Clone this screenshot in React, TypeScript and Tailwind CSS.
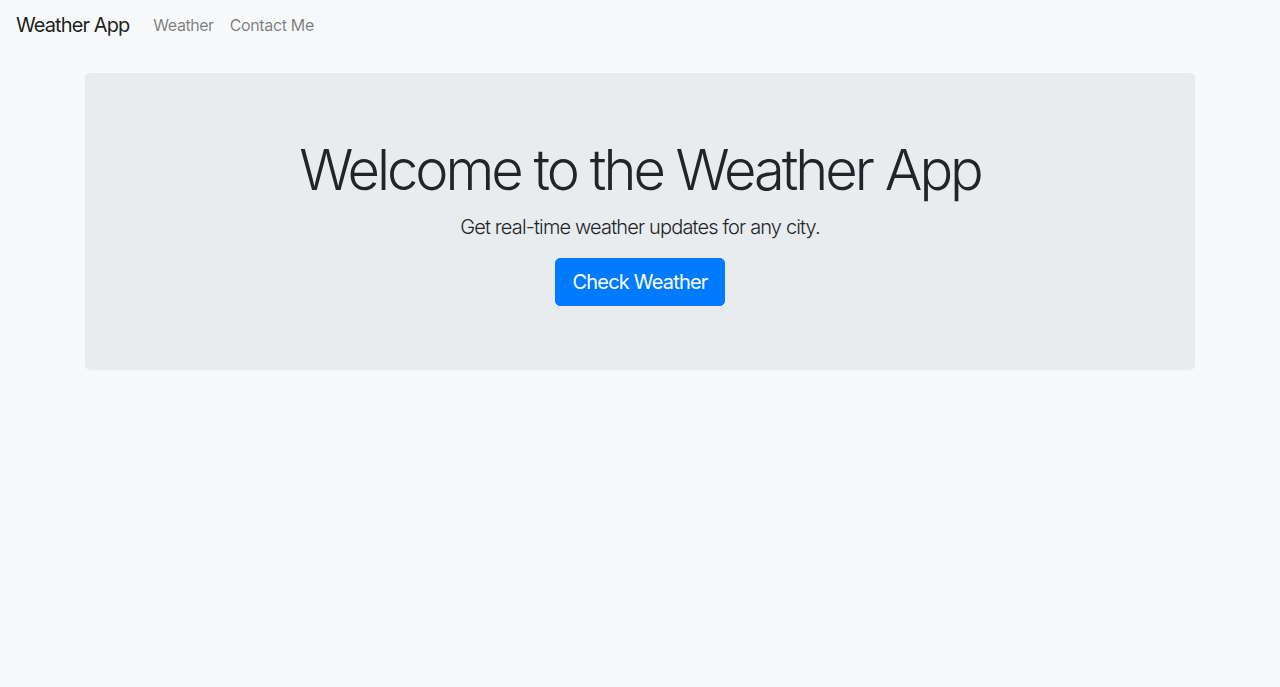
import React from "react";

const App = () => {
  return (
    <div
      className="min-h-screen w-full bg-[#f8f9fa] text-[#212529]"
      style={{ fontFamily: "Inter, 'Noto Sans', 'Liberation Sans', sans-serif" }}
    >
      <nav className="flex items-center px-4 pt-[10px]">
        <a href="#" className="mr-4 text-[20px] leading-[30px] tracking-[-0.9px] text-black/90">
          Weather App
        </a>
        <ul className="flex">
          <li>
            <a href="#" className="px-2 text-[16px] leading-[30px] tracking-[-0.45px] text-black/50">
              Weather
            </a>
          </li>
          <li>
            <a href="#" className="px-2 text-[16px] leading-[30px] tracking-[-0.35px] text-black/50">
              Contact Me
            </a>
          </li>
        </ul>
      </nav>

      <div className="mx-auto mt-[33px] w-[1140px] px-[15px]">
        <div className="rounded-[5px] bg-[#e9ecef] px-8 py-16 text-center">
          <h1 className="mb-2 text-[56px] font-light leading-[67px] tracking-[-3px]">
            Welcome to the Weather App
          </h1>
          <p className="mb-4 text-[20px] font-light leading-[30px] tracking-[-0.85px]">
            Get real-time weather updates for any city.
          </p>
          <button
            type="button"
            className="rounded-[5px] border border-[#007bff] bg-[#007bff] px-4 py-2 text-[20px] leading-[30px] tracking-[-0.8px] text-white hover:bg-[#0069d9]"
          >
            Check Weather
          </button>
        </div>
      </div>
    </div>
  );
};

export default App;
